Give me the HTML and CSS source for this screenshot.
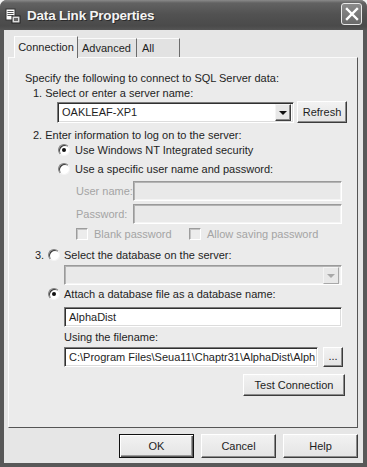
FILE: index.html
```html
<!DOCTYPE html>
<html lang="en">
<head>
    <meta charset="UTF-8">
    <meta name="viewport" content="width=device-width, initial-scale=1.0">
    <title>Data Link Properties</title>
    <link rel="stylesheet" href="styles.css">
</head>
<body>
    <div class="window">
        <div class="titlebar">
            <svg class="app-icon" width="16" height="16" viewBox="0 0 16 16">
                <rect x="1" y="1" width="9" height="11" fill="#fff" stroke="#333"/>
                <rect x="2.5" y="3" width="6" height="1" fill="#555"/>
                <rect x="2.5" y="5" width="6" height="1" fill="#555"/>
                <rect x="2.5" y="7" width="6" height="1" fill="#555"/>
                <rect x="7" y="8" width="8" height="7" fill="#ddd" stroke="#222"/>
                <rect x="9" y="10" width="4" height="3" fill="#666"/>
            </svg>
            <span class="title">Data Link Properties</span>
            <div class="close-btn">
                <svg width="14" height="14" viewBox="0 0 14 14">
                    <path d="M2 2 L12 12 M12 2 L2 12" stroke="#fff" stroke-width="2.4" stroke-linecap="square"/>
                </svg>
            </div>
        </div>

        <div class="client">
            <div class="tabs">
                <div class="tab active">Connection</div>
                <div class="tab">Advanced</div>
                <div class="tab last">All</div>
            </div>

            <div class="panel">
                <div class="line">Specify the following to connect to SQL Server data:</div>
                <div class="line step">1. Select or enter a server name:</div>
                <div class="row server-row">
                    <div class="field combo server-combo">
                        <span class="value">OAKLEAF-XP1</span>
                        <span class="drop-btn"><span class="arrow"></span></span>
                    </div>
                    <div class="btn refresh-btn">Refresh</div>
                </div>
                <div class="line step gap-5">2. Enter information to log on to the server:</div>
                <div class="row radio-row first">
                    <span class="radio checked"></span>
                    <span>Use Windows NT Integrated security</span>
                </div>
                <div class="row radio-row gap-5">
                    <span class="radio"></span>
                    <span>Use a specific user name and password:</span>
                </div>
                <div class="row cred-row gap-5">
                    <span class="disabled-label">User name:</span>
                    <div class="field disabled cred-box"></div>
                </div>
                <div class="row cred-row gap-3">
                    <span class="disabled-label">Password:</span>
                    <div class="field disabled cred-box"></div>
                </div>
                <div class="row check-row gap-3">
                    <span class="checkbox"></span>
                    <span class="disabled-label blank">Blank password</span>
                    <span class="checkbox"></span>
                    <span class="disabled-label">Allow saving password</span>
                </div>
                <div class="row db-row">
                    <span class="num">3.</span>
                    <span class="radio"></span>
                    <span>Select the database on the server:</span>
                </div>
                <div class="field combo disabled db-combo">
                    <span class="value"></span>
                    <span class="drop-btn off"><span class="arrow"></span></span>
                </div>
                <div class="row attach-row">
                    <span class="radio checked"></span>
                    <span>Attach a database file as a database name:</span>
                </div>
                <div class="field text-box name-box">AlphaDist</div>
                <div class="line sub gap-3">Using the filename:</div>
                <div class="row file-row">
                    <div class="field text-box file-box">C:\Program Files\Seua11\Chaptr31\AlphaDist\Alph</div>
                    <div class="btn browse-btn">...</div>
                </div>
                <div class="btn test-btn">Test Connection</div>
            </div>

            <div class="footer">
                <div class="btn dlg-btn default">OK</div>
                <div class="btn dlg-btn">Cancel</div>
                <div class="btn dlg-btn">Help</div>
            </div>
        </div>
    </div>
</body>
</html>
```

FILE: styles.css
```css
html, body {
    margin: 0;
    padding: 0;
    background: #f2f2f2;
}
body {
    font-family: "Liberation Sans", Arial, sans-serif;
    font-size: 11px;
    color: #1e1e1e;
}
.window {
    width: 367px;
    height: 467px;
    box-sizing: border-box;
    background: #585858;
    border-radius: 7px 7px 0 0;
    display: flex;
    flex-direction: column;
    overflow: hidden;
}
.titlebar {
    height: 30px;
    flex: none;
    display: flex;
    align-items: center;
    background: linear-gradient(#8a8a8a 0, #626262 3px, #525252 14px, #4a4a4a 26px, #555 30px);
    color: #f4f4f4;
    padding-left: 5px;
    padding-right: 5px;
}
.app-icon {
    flex: none;
    margin-top: 1px;
}
.title {
    font-weight: bold;
    font-size: 13.5px;
    letter-spacing: -0.2px;
    margin-left: 6px;
    margin-top: 1px;
    text-shadow: 1px 1px #2a2a2a;
    flex: 1;
}
.close-btn {
    width: 19px;
    height: 20px;
    border: 1px solid #e8e8e8;
    border-radius: 3px;
    background: linear-gradient(#8a8a8a, #6a6a6a);
    display: flex;
    align-items: center;
    justify-content: center;
    margin-top: -2px;
}
.client {
    flex: 1;
    margin: 0 4px 4px 4px;
    background: #e6e6e6;
    padding-top: 5px;
}

/* tabs */
.tabs {
    display: flex;
    align-items: flex-end;
    height: 22px;
    padding-left: 10px;
}
.tab {
    height: 19px;
    line-height: 19px;
    padding: 0 4px;
    border-top: 1px solid #fafafa;
    border-left: 1px solid #fafafa;
    border-right: 1px solid #6c6c6c;
    background: #e2e2e2;
    box-sizing: border-box;
}
.tab.active {
    height: 22px;
    line-height: 20px;
    width: 64px;
    padding: 0;
    text-align: center;
    background: #ececec;
    border-left-color: #fff;
    margin-bottom: -1px;
    position: relative;
    z-index: 1;
}
.tab:nth-child(2) {
    width: 59px;
    border-left: none;
}
.tab.last {
    width: 43px;
    padding-left: 5px;
    border-left: none;
}
.panel {
    margin-left: 4px;
    width: 350px;
    height: 371px;
    box-sizing: border-box;
    background: #ebebeb;
    border-top: 1px solid #fafafa;
    border-left: 1px solid #fafafa;
    border-right: 1px solid #555;
    border-bottom: 1px solid #555;
    padding: 13px 0 0 16px;
    display: flex;
    flex-direction: column;
    align-items: flex-start;
}
.line {
    height: 14px;
    line-height: 14px;
    white-space: nowrap;
}
.step {
    margin-left: 8px;
    margin-top: 1px;
}
.gap-3 { margin-top: 3px; }
.gap-5 { margin-top: 5px; }
.row {
    display: flex;
    align-items: center;
    white-space: nowrap;
}

/* fields */
.field {
    box-sizing: border-box;
    background: #fff;
    border-top: 1px solid #7a7a7a;
    border-left: 1px solid #7a7a7a;
    border-right: 1px solid #fff;
    border-bottom: 1px solid #fff;
    box-shadow: inset 1px 1px #303030, inset -1px -1px #dcdcdc;
}
.field.disabled {
    background: #e9e9e9;
    border-top-color: #9a9a9a;
    border-left-color: #9a9a9a;
    box-shadow: inset 1px 1px #b4b4b4, inset -1px -1px #f4f4f4;
}
.combo {
    display: flex;
    align-items: center;
    padding: 2px;
}
.combo .value {
    flex: 1;
    padding-left: 2px;
}
.drop-btn {
    width: 16px;
    height: 17px;
    box-sizing: border-box;
    background: #e8e8e8;
    border-top: 1px solid #f4f4f4;
    border-left: 1px solid #f4f4f4;
    border-right: 1px solid #404040;
    border-bottom: 1px solid #404040;
    box-shadow: inset -1px -1px #8a8a8a;
    display: flex;
    align-items: center;
    justify-content: center;
}
.arrow {
    width: 0;
    height: 0;
    border-left: 4px solid transparent;
    border-right: 4px solid transparent;
    border-top: 4px solid #111;
    margin-top: 1px;
}
.drop-btn.off {
    border-right-color: #a8a8a8;
    border-bottom-color: #a8a8a8;
    box-shadow: none;
}
.drop-btn.off .arrow {
    border-top-color: #a8a8a8;
}
.server-row {
    margin-left: 32px;
    margin-top: 1px;
    height: 22px;
}
.server-combo {
    width: 237px;
    height: 21px;
}
.btn {
    box-sizing: border-box;
    background: linear-gradient(#f2f2f2, #e4e4e4);
    border-top: 1px solid #fff;
    border-left: 1px solid #fff;
    border-right: 1px solid #3c3c3c;
    border-bottom: 1px solid #3c3c3c;
    box-shadow: inset -1px -1px #8c8c8c;
    text-align: center;
    white-space: nowrap;
}
.refresh-btn {
    width: 50px;
    height: 22px;
    line-height: 20px;
    margin-left: 3px;
}

/* radios and checks */
.radio {
    width: 12px;
    height: 12px;
    box-sizing: border-box;
    border-radius: 50%;
    background: #fff;
    border: 1px solid;
    border-color: #808080 #f4f4f4 #f4f4f4 #808080;
    box-shadow: inset 1px 1px #3a3a3a;
    position: relative;
    flex: none;
}
.radio.checked::after {
    content: "";
    position: absolute;
    left: 3px;
    top: 3px;
    width: 4px;
    height: 4px;
    border-radius: 50%;
    background: #111;
}
.radio-row {
    height: 14px;
    margin-left: 33px;
}
.radio-row .radio {
    margin-right: 5px;
}
.radio-row.first {
    margin-top: 1px;
}
.cred-row {
    height: 20px;
    margin-left: 51px;
}
.disabled-label {
    color: #a4a4a4;
}
.cred-row .disabled-label {
    width: 57px;
}
.cred-box {
    width: 209px;
    height: 20px;
}
.check-row {
    height: 14px;
    margin-left: 51px;
}
.checkbox {
    width: 12px;
    height: 12px;
    box-sizing: border-box;
    background: #ececec;
    border-top: 1px solid #9c9c9c;
    border-left: 1px solid #9c9c9c;
    border-right: 1px solid #fff;
    border-bottom: 1px solid #fff;
    box-shadow: inset 1px 1px #c4c4c4;
    margin-right: 6px;
    flex: none;
}
.blank {
    width: 95px;
}
.db-row {
    height: 14px;
    margin-top: 7px;
    margin-left: 10px;
}
.num {
    width: 13px;
}
.db-row .radio,
.attach-row .radio {
    margin-right: 4px;
}
.db-combo {
    width: 278px;
    height: 20px;
    margin-top: 3px;
    margin-left: 39px;
    padding: 2px 2px 1px 2px;
}
.attach-row {
    height: 14px;
    margin-top: 2px;
    margin-left: 23px;
}
.text-box {
    height: 20px;
    line-height: 18px;
    padding-left: 4px;
    white-space: nowrap;
    overflow: hidden;
}
.name-box {
    width: 278px;
    margin-top: 6px;
    margin-left: 39px;
}
.sub {
    margin-left: 39px;
}
.file-row {
    margin-top: 3px;
    margin-left: 39px;
    height: 20px;
}
.file-box {
    width: 254px;
}
.browse-btn {
    width: 20px;
    height: 20px;
    line-height: 16px;
    margin-left: 5px;
}
.test-btn {
    width: 102px;
    height: 22px;
    line-height: 20px;
    margin-top: 7px;
    margin-left: 218px;
}

/* dialog buttons */
.footer {
    display: flex;
    justify-content: flex-end;
    gap: 7px;
    margin-top: 6px;
    padding-right: 5px;
}
.dlg-btn {
    width: 75px;
    height: 24px;
    line-height: 22px;
}
.dlg-btn.default {
    border-color: #111;
    box-shadow: inset 1px 1px #fff, inset -1px -1px #5c5c5c, inset -2px -2px #9a9a9a;
}
```
